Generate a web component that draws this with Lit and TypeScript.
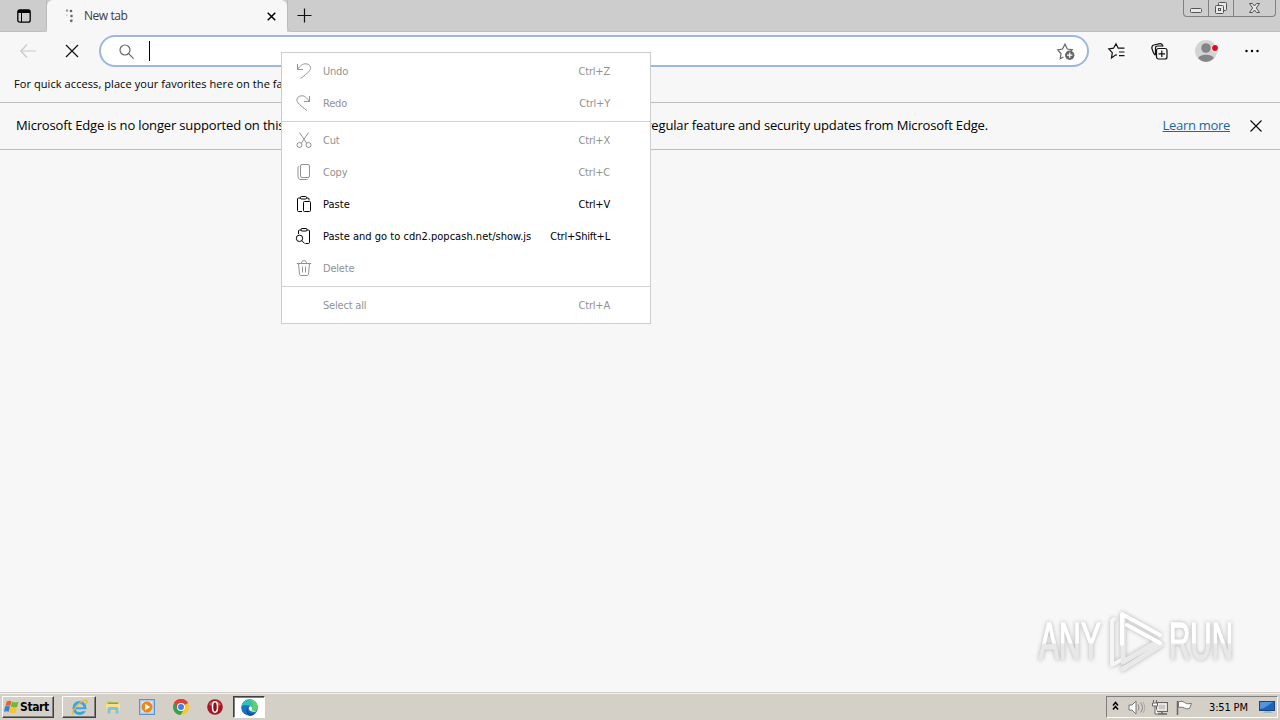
import { html, svg, LitElement, css, nothing } from 'lit';
import { customElement, property } from 'lit/decorators.js';

const icons: Record<string, unknown> = {
  undo: svg`<path d="M1.500 1v5.500h5.500M1.800 6.200C4.500 2.200 7 .8 9.500.8c4.500 0 6.500 4 4 7C11.500 10.200 8 13 4.500 15.500"/>`,
  redo: svg`<path d="M13.500 1v5.500H8M13.200 6.200C10.500 2.200 8.500.8 6 .8c-4.500 0-6.500 4-4 7C4 10.200 7.500 13 11 15.500"/>`,
  cut: svg`<path d="M3.500.5l7.300 11M12.500.5l-7.300 11"/><circle cx="3.500" cy="13" r="2.500"/><circle cx="12.500" cy="13" r="2.500"/>`,
  copy: svg`<rect x="4.500" y=".5" width="9" height="13" rx="1.500"/><path d="M3 2.200C2 2.500 2 3 2 4v8.500C2 14.500 3 15.500 5 15.500h5.500c.8 0 1.300-.3 1.500-.8"/>`,
  paste: svg`<path d="M6 15.500H2.500c-.6 0-1-.4-1-1V3c0-.6.4-1 1-1H5M10.500 2H12c.6 0 1 .4 1 1v1.500"/><rect x="4.500" y=".5" width="6" height="2.500" rx="1"/><rect x="7.500" y="5.500" width="7" height="10" rx="1"/>`,
  pasteGo: svg`<path d="M2.500 6V3c0-.6.4-1 1-1H5M11 2h1.500c.6 0 1 .4 1 1v11.500c0 .6-.4 1-1 1H9.500"/><rect x="5" y=".5" width="6" height="2.500" rx="1"/><circle cx="3.500" cy="10.300" r="3.200"/><path d="M5.800 12.600l3 3"/>`,
  delete: svg`<path d="M.8 3.500h14.400M5.500 3.300C5.500 1.500 6.500.7 8 .7s2.500.8 2.500 2.600M2.500 3.500l1 10.500c.1 1 .6 1.500 1.500 1.500h6c.9 0 1.400-.5 1.500-1.500l1-10.500M6.500 6.500v6M9.500 6.500v6"/>`,
};

interface MenuEntry {
  icon?: string;
  label: string;
  keys?: string;
  enabled?: boolean;
}

const menuGroups: MenuEntry[][] = [
  [
    { icon: 'undo', label: 'Undo', keys: 'Ctrl+Z' },
    { icon: 'redo', label: 'Redo', keys: 'Ctrl+Y' },
  ],
  [
    { icon: 'cut', label: 'Cut', keys: 'Ctrl+X' },
    { icon: 'copy', label: 'Copy', keys: 'Ctrl+C' },
    { icon: 'paste', label: 'Paste', keys: 'Ctrl+V', enabled: true },
    {
      icon: 'pasteGo',
      label: 'Paste and go to cdn2.popcash.net/show.js',
      keys: 'Ctrl+Shift+L',
      enabled: true,
    },
    { icon: 'delete', label: 'Delete' },
  ],
  [{ label: 'Select all', keys: 'Ctrl+A' }],
];

@customElement('edge-context-menu')
export class EdgeContextMenu extends LitElement {
  @property({ attribute: false }) groups: MenuEntry[][] = [];

  static styles = css`
    :host {
      display: block;
      box-sizing: border-box;
      border: 1px solid #cdcdcd;
      background: #fff;
      font: 11px 'DejaVu Sans Condensed', 'DejaVu Sans', sans-serif;
    }

    .group {
      padding: 2px 0;
    }

    .group + .group {
      border-top: 1px solid #d2d2d2;
    }

    .item {
      display: flex;
      align-items: center;
      height: 32px;
      padding: 0 40px 0 14px;
      color: #929292;
    }

    .item.enabled {
      color: #000;
    }

    .icon {
      width: 16px;
      height: 16px;
      margin-right: 11px;
      fill: none;
      stroke: currentColor;
      overflow: visible;
    }

    .label {
      flex: 1;
      white-space: nowrap;
      letter-spacing: -0.2px;
    }

    .enabled .label {
      letter-spacing: 0.02px;
    }

    .keys {
      letter-spacing: -0.2px;
    }
  `;

  render() {
    return this.groups.map(
      (group) => html`
        <div class="group">
          ${group.map(
            (item) => html`
              <div class="item ${item.enabled ? 'enabled' : ''}">
                <svg class="icon" viewBox="0 0 16 16">
                  ${item.icon ? icons[item.icon] : nothing}
                </svg>
                <span class="label">${item.label}</span>
                <span class="keys">${item.keys ?? nothing}</span>
              </div>
            `,
          )}
        </div>
      `,
    );
  }
}

@customElement('win-taskbar')
export class WinTaskbar extends LitElement {
  static styles = css`
    :host {
      display: flex;
      align-items: center;
      box-sizing: border-box;
      height: 28px;
      padding: 1px 2px 0;
      border-top: 1px solid #d0cdc8;
      background: #d4d0c8;
      box-shadow: inset 0 1px #f4f3f0;
      font: 11px 'DejaVu Sans Condensed', 'DejaVu Sans', sans-serif;
      color: #000;
    }

    .button {
      display: flex;
      align-items: center;
      justify-content: center;
      box-sizing: border-box;
      width: 34px;
      height: 22px;
    }

    .raised {
      border: 1px solid;
      border-color: #fff #404040 #404040 #fff;
      box-shadow: inset -1px -1px #808080;
    }

    .start {
      justify-content: flex-start;
      width: 52px;
      padding-left: 1px;
      margin-right: 8px;
      font-weight: bold;
      font-size: 12px;
      letter-spacing: -0.4px;
    }

    .active {
      width: 32px;
      margin-left: 1px;
      border: 1px solid;
      border-color: #404040 #fff #fff #404040;
      box-shadow: inset 1px 1px #808080;
      background: #fff;
    }

    .tray {
      display: flex;
      align-items: center;
      box-sizing: border-box;
      width: 172px;
      height: 22px;
      margin-left: auto;
      padding-left: 5px;
      border: 1px solid;
      border-color: #808080 #fff #fff #808080;
    }

    .clock {
      width: 50px;
      margin-left: 15px;
      white-space: nowrap;
      letter-spacing: -0.15px;
    }
  `;

  render() {
    return html`
      <div class="button raised start">
        <svg width="16" height="16" viewBox="0 0 17 16">
          <path d="M3 2Q5.500.5 8 2L6.700 7Q4 6 1.500 7Z" fill="#e8622a" />
          <path d="M8.500 2.500Q12 4 15.500 2.500L14 8Q11 9 7.300 7.500Z" fill="#74b43c" />
          <path d="M1.200 7.500Q4 6.500 6.400 7.500L5 13Q2.500 12 0 13Z" fill="#3a7fd0" />
          <path d="M7 8.200Q10.500 9.700 13.700 8.700L12.300 14Q9 15 5.600 13.500Z" fill="#f5c52c" />
        </svg>
        <span>Start</span>
      </div>
      <div class="button raised">
        <svg width="17" height="17" viewBox="0 0 17 17">
          <circle cx="8.500" cy="9" r="5.500" fill="none" stroke="#37a5e4" stroke-width="3" />
          <path d="M4 9.300h10.500" stroke="#37a5e4" stroke-width="2" />
          <path d="M10 11.200h5" stroke="#d4d0c8" stroke-width="2" />
          <path d="M2 15.500C-1 13 10 .5 15.500 1.500c1 .5.500 2-.5 3.500" fill="none" stroke="#edb72f" stroke-width="1.300" />
        </svg>
      </div>
      <div class="button">
        <svg width="16" height="16" viewBox="0 0 16 16">
          <path d="M1 4l1-2h4l1 1h7v9H1z" fill="#e9c866" />
          <path d="M3 3.500h10v3H3z" fill="#6cae61" />
          <path d="M1 5h14v7H1z" fill="#f8df8b" />
          <path d="M2.500 14.500V10q0-2 2-2h7q2 0 2 2v4.500h-3V11h-5v3.500z" fill="#7dc3e6" />
        </svg>
      </div>
      <div class="button">
        <svg width="16" height="16" viewBox="0 0 16 16">
          <rect x=".5" y=".5" width="15" height="15" fill="#a9cdea" stroke="#5a93c4" />
          <rect x="2.500" y="2.500" width="11" height="11" fill="#dcecf8" />
          <circle cx="8" cy="8" r="5.500" fill="#f28518" />
          <path d="M6 4.800v6.400L11.200 8z" fill="#fff" />
        </svg>
      </div>
      <div class="button">
        <svg width="16" height="16" viewBox="0 0 16 16">
          <circle cx="8" cy="8" r="8" fill="#fbc72f" />
          <path d="M8 8L1.100 4A8 8 0 0 1 14.900 4z" fill="#df4335" />
          <path d="M8 8L1.100 4A8 8 0 0 0 7.500 16L11.500 9.500z" fill="#34a151" />
          <path d="M8 4.200h7A8 8 0 0 0 1.100 4l3.500 6z" fill="#df4335" />
          <circle cx="8" cy="8" r="4" fill="#fff" />
          <circle cx="8" cy="8" r="3" fill="#3f7fe8" />
        </svg>
      </div>
      <div class="button">
        <svg width="16" height="16" viewBox="0 0 16 16">
          <circle cx="8" cy="8" r="7.800" fill="#a61720" />
          <path d="M2 6a6.500 6.500 0 0 1 12 0Q8 8 2 6z" fill="#d45a5c" />
          <ellipse cx="8" cy="8" rx="2.500" ry="5.200" fill="#8d0f18" stroke="#fff" stroke-width="1.500" />
        </svg>
      </div>
      <div class="button active">
        <svg width="17" height="17" viewBox="0 0 16 16">
          <circle cx="8" cy="8" r="7.800" fill="#1475c4" />
          <path d="M.3 7A7.800 7.800 0 0 1 15.800 8c0 3-4 4.200-6 2.500 1-1.500.5-4-2.500-4.500C4 5.500 1.500 6 .3 7z" fill="#35bfb0" />
          <path d="M9 .4a7.800 7.800 0 0 1 6.800 7.600c0 3-4 4.200-6 2.500C12 8 11 4 9 .4z" fill="#5fd06a" />
          <path d="M7.500 7.500C5 9 6 13.500 10.500 13.800c2 .1 3.500-.8 4.200-1.800A7.800 7.800 0 0 1 8 15.800C4 14 4 9 7.500 7.500z" fill="#11508e" />
          <path d="M9.800 10.500c1-1.200.8-3-.8-3.700-2 .4-2.500 3 0 4.400 2 1 4.500 1 6-.2-2 .5-4 .3-5.200-.5z" fill="#fff" />
        </svg>
      </div>
      <div class="tray">
        <svg width="82" height="18" viewBox="0 0 82 18" fill="none">
          <path d="M1 7.500l2.500-3L6 7.500M1 11.500l2.500-3L6 11.500" stroke="#000" stroke-width="1.500" />
          <path d="M17 7h3l4-4v13l-4-4h-3z" fill="#fff" stroke="#777" />
          <path d="M26 6.500q2 3 0 6M28.500 4.500q4 5 0 10" stroke="#8a8a8a" />
          <path d="M31 4q3.500 5.500 0 11" stroke="#adaba6" />
          <rect x="44.500" y="4.500" width="11" height="9" fill="#c7c7c4" stroke="#666" />
          <rect x="46" y="6" width="8" height="6" stroke="#fff" />
          <path d="M46 16h9M50 14v2" stroke="#666" stroke-width="1.500" />
          <path d="M41.500 2v3M44.500 2v3M40.500 5h5v3h-5zM43 8v8h3" fill="#fff" stroke="#666" />
          <path d="M65.500 3v14" stroke="#666" stroke-width="1.500" />
          <path d="M66.500 3.500q4-1 6 1t7 1l-2 5q-3 1-5-.5t-6-.5z" fill="#fff" stroke="#777" />
        </svg>
        <span class="clock">3:51 PM</span>
        <svg width="16" height="16" viewBox="0 0 16 16">
          <rect x=".5" y="2.500" width="15" height="9" fill="#1e62bb" stroke="#174680" />
          <path d="M1 3h13L5 9 1 10z" fill="#5694da" />
          <path d="M6 12h5l3 2H4z" fill="#a0b8cb" />
        </svg>
      </div>
    `;
  }
}

@customElement('app-root')
export class AppRoot extends LitElement {
  static styles = css`
    :host {
      display: flex;
      flex-direction: column;
      position: relative;
      width: 1280px;
      height: 720px;
      overflow: hidden;
      background: #f7f7f7;
      font: 12px 'Open Sans', 'Noto Sans', sans-serif;
      color: #000;
    }

    svg {
      display: block;
      flex: none;
      overflow: visible;
    }

    .line {
      fill: none;
      stroke: #111;
      stroke-width: 1.200;
    }

    .tabs {
      display: flex;
      align-items: center;
      height: 32px;
      background: #cdcdcd;
    }

    .actions {
      display: flex;
      align-items: center;
      justify-content: center;
      box-sizing: border-box;
      width: 47px;
      height: 32px;
      padding-left: 2px;
      border-right: 1px solid #bbb;
      border-bottom: 1px solid #bdbdbd;
      border-bottom-right-radius: 5px;
    }

    .tab {
      display: flex;
      align-items: center;
      box-sizing: border-box;
      width: 240px;
      height: 32px;
      padding: 0 11px 0 18px;
      border-radius: 6px 6px 0 0;
      background: #f7f7f7;
      color: #3c3c3c;
    }

    .title {
      flex: 1;
      padding: 0 0 1px 9px;
      letter-spacing: -0.45px;
    }

    .strip {
      display: flex;
      align-items: center;
      box-sizing: border-box;
      flex: 1;
      height: 32px;
      padding: 0 4px 0 9px;
      border-left: 1px solid #bbb;
      border-bottom: 1px solid #bdbdbd;
      border-bottom-left-radius: 5px;
    }

    .window {
      display: flex;
      align-self: flex-start;
      box-sizing: border-box;
      width: 93px;
      height: 17px;
      margin-left: auto;
      border: 1px solid #818181;
      border-top: 0;
      border-radius: 0 0 4px 4px;
    }

    .window svg {
      fill: #e8e8e8;
      stroke: #555;
    }

    .toolbar {
      display: flex;
      align-items: center;
      height: 38px;
      padding-left: 20px;
    }

    .back {
      stroke: #c9c9c9;
    }

    .stop {
      margin: 0 20px 0 29px;
    }

    .omnibox {
      display: flex;
      align-items: center;
      box-sizing: border-box;
      width: 990px;
      height: 32px;
      padding: 0 12px 0 18px;
      border: 2px solid #9db7e0;
      border-radius: 16px;
      background: #fff;
    }

    .omnibox .line {
      stroke: #666;
    }

    .caret {
      width: 1px;
      height: 20px;
      margin: 0 auto 0 15px;
      background: #000;
    }

    .tools {
      display: flex;
      align-items: center;
      justify-content: space-between;
      width: 151px;
      padding-left: 19px;
    }

    .favorites {
      box-sizing: border-box;
      height: 33px;
      padding: 5px 14px 0;
      border-bottom: 1px solid #bcbcbc;
      font-size: 11px;
      line-height: 18px;
      white-space: nowrap;
      letter-spacing: 0.08px;
    }

    .notice {
      display: flex;
      align-items: center;
      box-sizing: border-box;
      height: 47px;
      padding: 0 18px 0 16px;
      border-bottom: 1px solid #bcbcbc;
      font-size: 13px;
      white-space: nowrap;
    }

    .message {
      display: flex;
      justify-content: space-between;
      width: 972px;
      padding-bottom: 2px;
      letter-spacing: -0.16px;
    }

    .more {
      margin: 0 20px 0 auto;
      padding-bottom: 2px;
      color: #1668ac;
      text-decoration: underline;
      letter-spacing: -0.3px;
    }

    .page {
      flex: 1;
    }

    .menu {
      position: absolute;
      left: 281px;
      top: 52px;
      width: 370px;
    }

    .watermark {
      position: absolute;
      left: 1030px;
      top: 604px;
      filter: drop-shadow(0 0 2px rgba(0, 0, 0, 0.28));
      font-family: 'Liberation Sans', sans-serif;
    }
  `;

  private renderTabs() {
    return html`
      <div class="tabs">
        <div class="actions">
          <svg width="14" height="14" viewBox="0 0 14 14">
            <rect x=".8" y=".8" width="12.400" height="12.400" rx="2" fill="none" stroke="#000" stroke-width="1.300" />
            <path d="M1 1h12v3H1z" />
            <path d="M4.500 4v9" stroke="#000" />
          </svg>
        </div>
        <div class="tab">
          <svg width="10" height="16" viewBox="0 0 10 16" fill="#666">
            <circle cx="2" cy="2.500" r="1.200" fill="#999" />
            <circle cx="6" cy="3" r="1.300" />
            <circle cx="1.800" cy="7" r=".8" fill="#bbb" />
            <circle cx="6.500" cy="8" r="1.300" />
            <circle cx="6.300" cy="12.800" r="1.400" />
          </svg>
          <span class="title">New tab</span>
          <svg width="9" height="9" viewBox="0 0 9 9">
            <path d="M.7.7l7.600 7.600M8.300.7L.7 8.300" stroke="#000" stroke-width="1.500" />
          </svg>
        </div>
        <div class="strip">
          <svg class="line" width="15" height="15" viewBox="0 0 15 15">
            <path d="M7.500.5v14M.5 7.500h14" />
          </svg>
          <div class="window">
            <svg width="91" height="16" viewBox="0 0 91 16">
              <path d="M24.500 0v16M49.500 0v16" stroke="#818181" />
              <rect x="6.500" y="8.500" width="11" height="4" rx="1" />
              <rect x="34.500" y="2.500" width="8" height="8" rx="1" />
              <rect x="31.500" y="5.500" width="8" height="8" rx="1" />
              <rect x="34.500" y="8.500" width="2" height="2" />
              <path d="M65.500 3.500h3l2 2.500 2-2.500h3L72.300 8l3.200 4.500h-3l-2-2.500-2 2.500h-3L68.700 8z" />
            </svg>
          </div>
        </div>
      </div>
    `;
  }

  private renderToolbar() {
    return html`
      <div class="toolbar">
        <svg class="line back" width="16" height="14" viewBox="0 0 16 14">
          <path d="M7 .5L.8 7 7 13.500M.8 7h15" />
        </svg>
        <svg class="line stop" width="14" height="14" viewBox="0 0 14 14">
          <path d="M1 1l12 12M13 1L1 13" />
        </svg>
        <div class="omnibox">
          <svg class="line" width="15" height="15" viewBox="0 0 15 15">
            <circle cx="6" cy="6" r="5" />
            <path d="M9.600 9.600l5 5" />
          </svg>
          <span class="caret"></span>
          <svg class="line" width="18" height="17" viewBox="0 0 18 17">
            <path d="M6.500 14l-3.300 1.700.8-5.200L.7 6.800l4.800-.8L8 1.200l2.300 4.800 5 .7-2 2" />
            <circle cx="12.700" cy="12.200" r="4.700" fill="#666" stroke="none" />
            <path d="M12.700 9.500v5.400M10 12.200h5.400" stroke="#fff" />
          </svg>
        </div>
        <div class="tools">
          <svg class="line" width="17" height="16" viewBox="0 0 17 16">
            <path d="M9 12.200L7.700 11.800 3.500 15l.8-5.300L.8 6l4.700-.8L8 .8l2.200 4.400h6.300M11 9h5.500M11 12.700h5.500" />
          </svg>
          <svg class="line" width="17" height="17" viewBox="0 0 17 17">
            <path d="M4.500 12.200C2.800 11.500 2 9 .9 5.500.6 3.500 1 2.500 2.800 2L9 .7c1.500-.2 2.300.5 2.700 2.300" />
            <path d="M4.500 12V5c0-1.300.7-2 2-2h6" />
            <rect x="5.500" y="5.500" width="10.500" height="10.500" rx="2" fill="#f7f7f7" />
            <path d="M10.800 7.500v6.500M7.500 10.800H14" />
          </svg>
          <svg width="24" height="22" viewBox="0 0 24 22">
            <circle cx="11" cy="11" r="11" fill="#d4d4d4" />
            <circle cx="11" cy="8" r="4.800" fill="#858585" />
            <path d="M3.300 18.500C4 13.500 18 13.500 18.700 18.500Q11 25.500 3.300 18.500z" fill="#858585" />
            <circle cx="20" cy="8" r="3.800" fill="#fff" opacity=".6" />
            <circle cx="20" cy="8" r="2.900" fill="#e00b1c" />
          </svg>
          <svg width="14" height="4" viewBox="0 0 14 4">
            <circle cx="1.500" cy="2" r="1.200" />
            <circle cx="7" cy="2" r="1.200" />
            <circle cx="12.500" cy="2" r="1.200" />
          </svg>
        </div>
      </div>
    `;
  }

  render() {
    return html`
      ${this.renderTabs()} ${this.renderToolbar()}
      <div class="favorites">
        For quick access, place your favorites here on the favorites bar.
      </div>
      <div class="notice">
        <div class="message">
          <span>Microsoft Edge is no longer supported on this version of</span>
          <span>regular feature and security updates from Microsoft Edge.</span>
        </div>
        <span class="more">Learn more</span>
        <svg class="line" width="12" height="12" viewBox="0 0 12 12">
          <path d="M.5.5l11 11M11.500.5l-11 11" />
        </svg>
      </div>
      <div class="page"></div>
      <win-taskbar></win-taskbar>
      <edge-context-menu class="menu" .groups=${menuGroups}></edge-context-menu>
      <svg class="watermark" width="210" height="74" viewBox="0 0 210 74">
        <defs>
          <linearGradient id="fade" gradientUnits="userSpaceOnUse" x1="0" y1="18" x2="0" y2="56">
            <stop offset=".55" stop-color="#fff" />
            <stop offset=".58" stop-color="#e8e8e8" />
          </linearGradient>
        </defs>
        <g fill="url(#fade)" stroke="url(#fade)" stroke-width="1.500" font-size="51">
          <text x="9" y="55" textLength="62" lengthAdjust="spacingAndGlyphs">ANY</text>
          <text x="139" y="55" textLength="64" lengthAdjust="spacingAndGlyphs">RUN</text>
        </g>
        <g fill="none" stroke-width="5" stroke-linejoin="round" stroke-linecap="round">
          <path d="M84 15l-2 2v44l9-5" stroke="#f5f5f5" stroke-width="4" />
          <path d="M93 65l38-24-4-3-34 20V11" stroke="#e9e9e9" />
          <path d="M92 40V10l38 21M97 21l33 18" stroke="#fff" stroke-width="4" />
        </g>
      </svg>
    `;
  }
}
